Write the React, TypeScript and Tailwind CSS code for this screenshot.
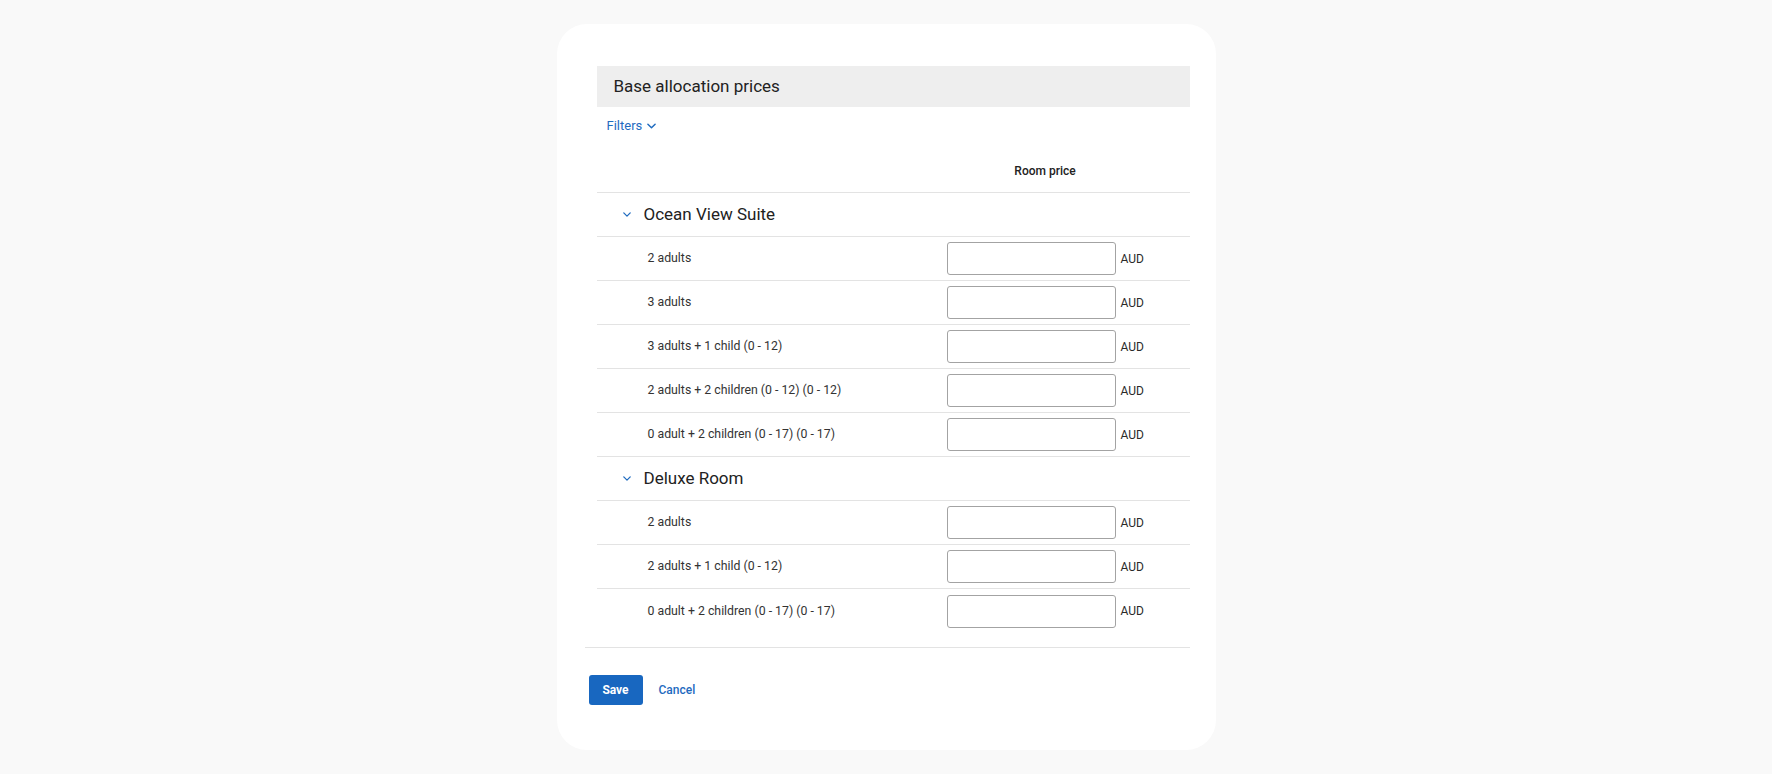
import React from 'react';

type Group = {
  name: string;
  rows: string[];
};

const groups: Group[] = [
  {
    name: 'Ocean View Suite',
    rows: [
      '2 adults',
      '3 adults',
      '3 adults + 1 child (0 - 12)',
      '2 adults + 2 children (0 - 12) (0 - 12)',
      '0 adult + 2 children (0 - 17) (0 - 17)',
    ],
  },
  {
    name: 'Deluxe Room',
    rows: ['2 adults', '2 adults + 1 child (0 - 12)', '0 adult + 2 children (0 - 17) (0 - 17)'],
  },
];

const SmallChevron: React.FC<{ className?: string }> = ({ className }) => (
  <svg viewBox="0 0 10 6" className={className} fill="none">
    <polyline points="1,1 5,5 9,1" stroke="currentColor" strokeWidth="1.6" strokeLinecap="round" strokeLinejoin="round" />
  </svg>
);

const PriceRow: React.FC<{ label: string; last: boolean }> = ({ label, last }) => (
  <div className={`flex h-[44px] items-center ${last ? '' : 'border-b border-[#e3e3e3]'}`}>
    <div className="w-[350px] pl-[51px] text-[12.3px] text-[#333333]">{label}</div>
    <div className="flex items-center gap-[5px]">
      <input
        type="text"
        className="h-[33px] w-[169px] rounded-[3px] border border-[#a3a3a3] bg-white px-2 text-[13px] outline-none"
      />
      <span className="text-[12px] text-[#2a2a2a]">AUD</span>
    </div>
  </div>
);

export default function App() {
  return (
    <div
      className="flex min-h-screen items-center justify-center bg-[#f9f9f9]"
      style={{ fontFamily: 'Roboto, "Noto Sans", "Liberation Sans", sans-serif' }}
    >
      <div className="w-[659px] rounded-[30px] bg-white pt-[42px] pl-[28px] pr-[26px] pb-[45px]">
        <div className="border-b border-[#e3e3e3] pb-[14px]">
          <div className="ml-[12px]">
            <div className="flex h-[41px] items-center bg-[#eeeeee] pl-[17px] text-[17px] text-[#222222]">
              Base allocation prices
            </div>

            <div className="h-[43px] pt-[9px] pl-[10px]">
              <button type="button" className="flex items-center gap-[5px] text-[13px] leading-[20px] text-[#1f6bbf]">
                <span>Filters</span>
                <SmallChevron className="h-[6px] w-[9px]" />
              </button>
            </div>

            <div className="flex h-[43px] items-center border-b border-[#e3e3e3]">
              <div className="w-[350px]" />
              <div className="w-[197px] text-center text-[12px] font-medium text-[#222222]">Room price</div>
            </div>

            {groups.map((group, gi) => (
              <div key={group.name}>
                <div className="flex h-[44px] items-center border-b border-[#e3e3e3] pl-[26px]">
                  <SmallChevron className="h-[5px] w-[8px] text-[#1f6bbf]" />
                  <span className="ml-[13px] text-[17px] text-[#222222]">{group.name}</span>
                </div>
                {group.rows.map((row, ri) => (
                  <PriceRow
                    key={row + ri}
                    label={row}
                    last={gi === groups.length - 1 && ri === group.rows.length - 1}
                  />
                ))}
              </div>
            ))}
          </div>
        </div>

        <div className="mt-[27px] flex items-center gap-[16px] pl-[4px]">
          <button
            type="button"
            className="h-[30px] w-[54px] rounded-[3px] bg-[#1867c0] text-[12px] font-bold text-white"
          >
            Save
          </button>
          <button type="button" className="text-[12px] font-medium text-[#1f6bbf]">
            Cancel
          </button>
        </div>
      </div>
    </div>
  );
}
